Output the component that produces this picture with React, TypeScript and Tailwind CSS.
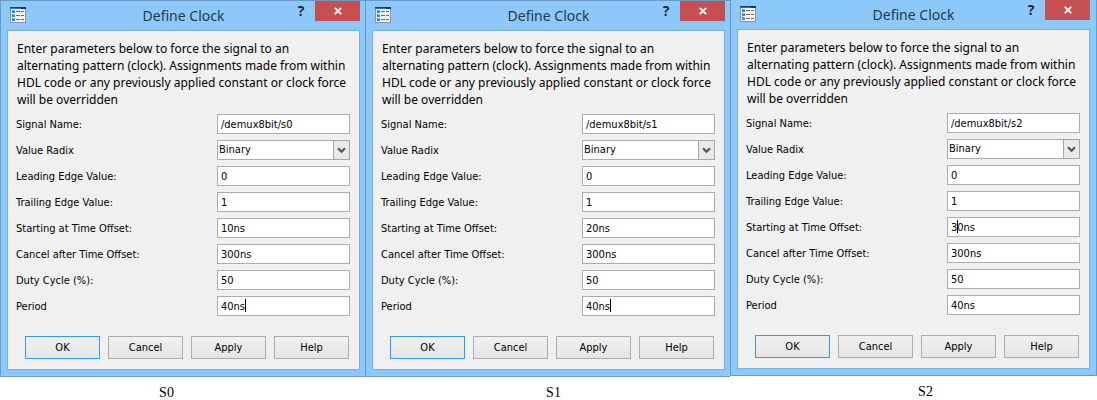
import React from "react";

type Field = { label: string; value: string; kind?: "select"; caret?: string };

type ClockDialog = {
  id: string;
  fields: Field[];
  frame: string;
  caption: string;
};

function clockFields(signal: string, offset: string, carets: { offset?: string; period?: string }): Field[] {
  return [
    { label: "Signal Name:", value: "/demux8bit/" + signal },
    { label: "Value Radix", value: "Binary", kind: "select" },
    { label: "Leading Edge Value:", value: "0" },
    { label: "Trailing Edge Value:", value: "1" },
    { label: "Starting at Time Offset:", value: offset, caret: carets.offset },
    { label: "Cancel after Time Offset:", value: "300ns" },
    { label: "Duty Cycle (%):", value: "50" },
    { label: "Period", value: "40ns", caret: carets.period },
  ];
}

const dialogs: ClockDialog[] = [
  {
    id: "S0",
    fields: clockFields("s0", "10ns", { period: "left-[28px]" }),
    frame: "border-t border-l pr-[5px]",
    caption: "pr-8",
  },
  {
    id: "S1",
    fields: clockFields("s1", "20ns", { period: "left-[28px]" }),
    frame: "border-t border-l pr-[5px]",
    caption: "pl-3",
  },
  {
    id: "S2",
    fields: clockFields("s2", "30ns", { offset: "left-[10px]" }),
    frame: "border-x pr-[6px]",
    caption: "pl-6",
  },
];

function FormIcon() {
  return (
    <svg width="16" height="16" viewBox="0 0 16 16" shapeRendering="crispEdges" aria-hidden="true">
      <rect width="16" height="16" fill="#8795a8" />
      <rect x="1" y="2" width="14" height="13" fill="#f4f2ec" />
      <rect width="16" height="1" fill="#123f94" />
      <rect y="1" width="16" height="1" fill="#2f6dc4" />
      <rect x="11" width="5" height="2" fill="#16307a" />
      {[3, 7, 11].map((y) => (
        <g key={y}>
          <rect x="2" y={y} width="3" height="3" fill="#2f86cf" />
          <rect x="3" y={y} width="2" height="1" fill="#7fc0ee" />
          <rect x="6" y={y + 1} width="4" height="1" fill="#6b6b6b" />
          <rect x="11" y={y + 1} width="3" height="1" fill="#6b6b6b" />
        </g>
      ))}
    </svg>
  );
}

function FieldRow({ field, id }: { field: Field; id: string }) {
  return (
    <div className="flex h-5 items-center justify-between">
      <label htmlFor={id} className="pt-[2px] whitespace-nowrap">
        {field.label}
      </label>
      <div className="relative h-5 w-[133px] shrink-0">
        {field.kind === "select" ? (
          <>
            <select
              id={id}
              defaultValue={field.value}
              className="block h-5 w-full appearance-none rounded-none border border-[#abadb3] bg-white pl-px outline-none"
            >
              <option>{field.value}</option>
            </select>
            <span className="pointer-events-none absolute top-0 right-0 flex h-5 w-[17px] items-center justify-center border border-[#a6a6a6] bg-[#e9e9e9]">
              <svg width="9" height="7" viewBox="0 0 9 7" aria-hidden="true">
                <path d="M1 1.2 L4.5 4.7 L8 1.2" fill="none" stroke="#555" strokeWidth="2.2" />
              </svg>
            </span>
          </>
        ) : (
          <input
            id={id}
            type="text"
            defaultValue={field.value}
            className="block h-5 w-full border border-[#abadb3] bg-white px-[3px] outline-none"
          />
        )}
        {field.caret && <span className={"pointer-events-none absolute top-[3px] h-[13px] w-px bg-black " + field.caret} />}
      </div>
    </div>
  );
}

function Dialog({ dialog }: { dialog: ClockDialog }) {
  return (
    <section
      className={
        "border-b border-[#6b9ac6] bg-[#8dc8fb] pb-[6px] pl-[6px] " + dialog.frame
      }
    >
      <header className="grid h-[29px] grid-cols-[1fr_auto_1fr]">
        <span className="mt-[6px] ml-[3px]">
          <FormIcon />
        </span>
        <h2 className="font-['Noto_Sans','Open_Sans',sans-serif] text-[14px] leading-[29px] text-[#26384a]">
          Define Clock
        </h2>
        <div className="flex items-start justify-end">
          <button
            type="button"
            aria-label="Help"
            className="mr-[2px] h-5 w-6 font-['Open_Sans',sans-serif] text-[14px] leading-5 font-bold text-[#1e2830]"
          >
            ?
          </button>
          <button type="button" aria-label="Close" className="flex h-5 w-[45px] items-center justify-center bg-[#c75050]">
            <svg width="8" height="8" viewBox="0 0 8 8" aria-hidden="true">
              <path d="M0.8 0.8 L7.2 7.2 M7.2 0.8 L0.8 7.2" stroke="#fff" strokeWidth="1.9" />
            </svg>
          </button>
        </div>
      </header>
      <form
        onSubmit={(e) => e.preventDefault()}
        className="border border-[#7aaedb] bg-[#f0f0f0] pt-[9px] pr-[9px] pb-[10px] pl-2 text-black"
      >
        <p className="pl-px font-['Noto_Sans',sans-serif] text-[12px] leading-[17px] whitespace-nowrap">
          Enter parameters below to force the signal to an
          <br />
          alternating pattern (clock). Assignments made from within
          <br />
          HDL code or any previously applied constant or clock force
          <br />
          will be overridden
        </p>
        <div className="mt-[6px] flex flex-col gap-[6px] text-[11px]">
          {dialog.fields.map((field, i) => (
            <FieldRow key={field.label} field={field} id={dialog.id + "-" + i} />
          ))}
        </div>
        <div className="mt-5 flex justify-end gap-2 pr-px text-[11px]">
          {["OK", "Cancel", "Apply", "Help"].map((name) => (
            <button
              key={name}
              type="button"
              className={
                "h-[23px] w-[75px] border bg-linear-to-b from-[#f0f0f0] to-[#e5e5e5] pt-[2px] " +
                (name === "OK" ? "border-[#3399ff]" : "border-[#acacac]")
              }
            >
              {name}
            </button>
          ))}
        </div>
      </form>
    </section>
  );
}

export default function App() {
  return (
    <main className="grid min-h-screen grid-cols-[365fr_365fr_367fr] items-start bg-white font-['DejaVu_Sans_Condensed','DejaVu_Sans',sans-serif]">
      {dialogs.map((dialog) => (
        <figure key={dialog.id} className="min-w-0">
          <Dialog dialog={dialog} />
          <figcaption
            className={
              "pt-2 text-center font-['Liberation_Serif',serif] text-[14px] leading-4 text-black " + dialog.caption
            }
          >
            {dialog.id}
          </figcaption>
        </figure>
      ))}
    </main>
  );
}
